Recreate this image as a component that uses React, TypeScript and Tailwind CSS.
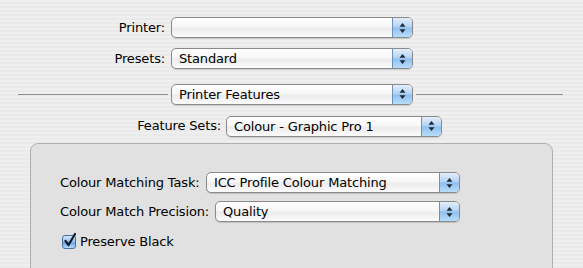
import React from "react";

const font = "font-['DejaVu_Sans',sans-serif]";

const Arrows = () => (
  <svg width="7" height="12" viewBox="0 0 7 12">
    <path d="M3.5 1 L6.5 4.8 L0.5 4.8 Z" fill="#1d2a3a" />
    <path d="M3.5 11 L6.5 7.2 L0.5 7.2 Z" fill="#1d2a3a" />
  </svg>
);

const Popup = ({ value, className }: { value?: string; className: string }) => (
  <div
    className={`flex h-[21px] rounded-[5px] border border-[#8a8a8a] bg-[linear-gradient(180deg,#ffffff_0%,#f7f7f7_45%,#ececec_55%,#fbfbfb_100%)] shadow-[0_1px_1px_rgba(0,0,0,0.15)] overflow-hidden ${className}`}
  >
    <div className="flex-1 pl-[7px] text-[13px] leading-[19px] text-black whitespace-nowrap">
      {value}
    </div>
    <div className="w-[20px] flex items-center justify-center border-l border-[#6d8fb8] bg-[linear-gradient(180deg,#e3eefa_0%,#b5d4f3_45%,#8ec0ef_52%,#b9dcfb_100%)]">
      <Arrows />
    </div>
  </div>
);

const Checkbox = () => (
  <div className="w-[14px] h-[14px] rounded-[3px] border border-[#4a6f9c] bg-[linear-gradient(180deg,#d7e8fa_0%,#8fc0ef_50%,#6aa8e6_55%,#b7dbfb_100%)] flex items-center justify-center relative">
    <svg width="14" height="16" viewBox="0 0 14 16" className="absolute -top-[4px] left-[0px]">
      <path d="M2.5 9 L5.5 13 L12 2" stroke="#0e1a2b" strokeWidth="2.2" fill="none" strokeLinecap="round" strokeLinejoin="round" />
    </svg>
  </div>
);

export default function App() {
  return (
    <div
      className={`w-[583px] h-[268px] overflow-hidden text-black tracking-[-0.15px] ${font} bg-[repeating-linear-gradient(180deg,#efefef_0px,#efefef_2px,#eaeaea_2px,#eaeaea_4px)]`}
    >
      <div className="pt-[17px]">
        <div className="flex items-center h-[21px]">
          <div className="w-[165px] text-right text-[13px]">Printer:</div>
          <Popup className="ml-[6px] w-[242px]" />
        </div>
        <div className="flex items-center h-[21px] mt-[10px]">
          <div className="w-[165px] text-right text-[13px]">Presets:</div>
          <Popup className="ml-[6px] w-[242px]" value="Standard" />
        </div>
        <div className="flex items-center h-[20px] mt-[15px]">
          <div className="ml-[18px] w-[150px] h-px bg-[#8d8d8d]" />
          <Popup className="ml-[3px] w-[242px]" value="Printer Features" />
          <div className="ml-[3px] w-[147px] h-px bg-[#8d8d8d]" />
        </div>
        <div className="flex items-center h-[20px] mt-[12px]">
          <div className="w-[221px] text-right text-[13px]">Feature Sets:</div>
          <Popup className="ml-[5px] w-[216px]" value="Colour - Graphic Pro 1" />
        </div>
        <div className="mt-[7px] ml-[30px] w-[523px] h-[200px] rounded-t-[8px] border border-[#b0b0b0] bg-[#e1e1e1] pt-[28px] pl-[29px]">
          <div className="flex items-center h-[21px]">
            <div className="w-[143px] text-[13px] whitespace-nowrap">Colour Matching Task:</div>
            <Popup className="ml-[3px] w-[254px]" value="ICC Profile Colour Matching" />
          </div>
          <div className="flex items-center h-[21px] mt-[8px]">
            <div className="w-[152px] text-[13px] whitespace-nowrap">Colour Match Precision:</div>
            <Popup className="ml-[3px] w-[245px]" value="Quality" />
          </div>
          <div className="flex items-center mt-[10px] ml-[2px]">
            <Checkbox />
            <div className="ml-[4px] text-[13px]">Preserve Black</div>
          </div>
        </div>
      </div>
    </div>
  );
}
